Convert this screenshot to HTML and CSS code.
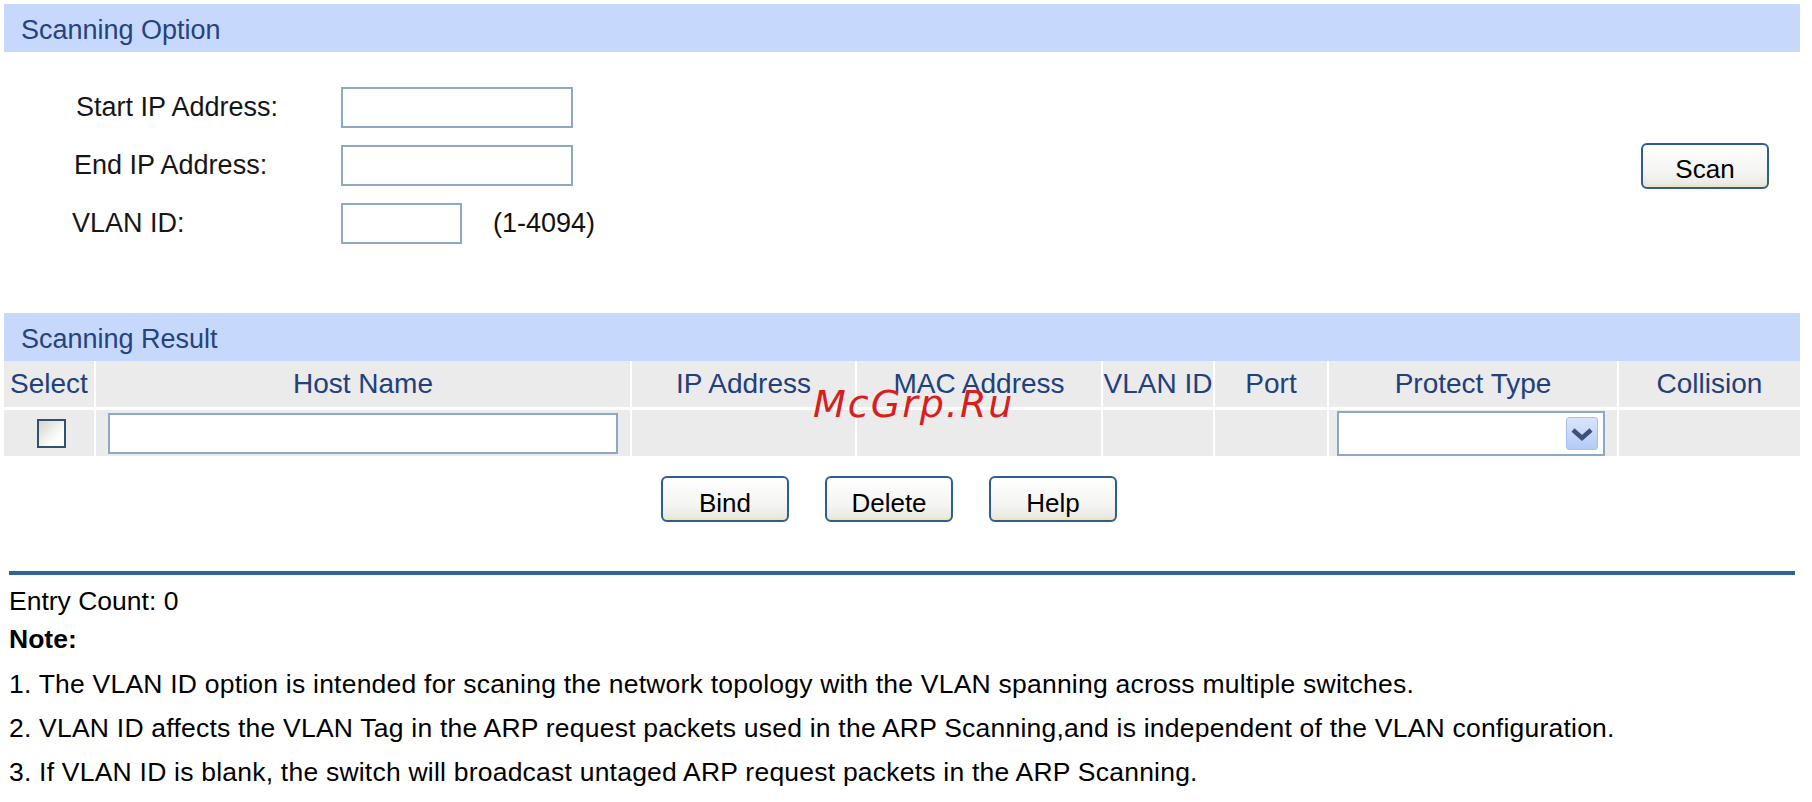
FILE: index.html
```html
<!DOCTYPE html>
<html lang="en">
<head>
<meta charset="utf-8">
<title>ARP Scanning</title>
<link rel="stylesheet" href="styles.css">
</head>
<body>
<div class="page">
  <div class="bar">Scanning Option</div>

  <form class="scan-form">
    <div class="fields">
      <label class="lbl lbl-start" for="start-ip">Start IP Address:</label>
      <input id="start-ip" class="text wide" type="text">
      <label class="lbl lbl-end" for="end-ip">End IP Address:</label>
      <input id="end-ip" class="text wide" type="text">
      <label class="lbl" for="vlan-id">VLAN ID:</label>
      <div class="vlan-cell">
        <input id="vlan-id" class="text short" type="text">
        <span class="range">(1-4094)</span>
      </div>
    </div>
    <button type="button" class="btn">Scan</button>
  </form>

  <div class="bar bar-result">Scanning Result</div>
  <table class="results">
    <colgroup>
      <col class="w-select"><col class="w-host"><col class="w-ip"><col class="w-mac">
      <col class="w-vlan"><col class="w-port"><col class="w-type"><col class="w-coll">
    </colgroup>
    <thead>
      <tr>
        <th>Select</th><th>Host Name</th><th>IP Address</th><th>MAC Address</th>
        <th>VLAN ID</th><th>Port</th><th>Protect Type</th><th>Collision</th>
      </tr>
    </thead>
    <tbody>
      <tr>
        <td><input type="checkbox" class="check"></td>
        <td><input type="text" class="text host"></td>
        <td></td><td></td><td></td><td></td>
        <td>
          <div class="select-box">
            <select class="type-select"><option></option></select>
            <span class="drop-btn">
              <svg width="32" height="33" viewBox="0 0 32 33"><path d="M7 13 L16 21 L25 13" fill="none" stroke="#3e5077" stroke-width="4.5"/></svg>
            </span>
          </div>
        </td>
        <td></td>
      </tr>
    </tbody>
  </table>

  <div class="actions">
    <button type="button" class="btn">Bind</button>
    <button type="button" class="btn">Delete</button>
    <button type="button" class="btn">Help</button>
  </div>

  <hr class="rule">

  <div class="summary">
    <p class="count">Entry Count: 0</p>
    <p class="note-title">Note:</p>
    <p class="note first">1. The VLAN ID option is intended for scaning the network topology with the VLAN spanning across multiple switches.</p>
    <p class="note">2. VLAN ID affects the VLAN Tag in the ARP request packets used in the ARP Scanning,and is independent of the VLAN configuration.</p>
    <p class="note">3. If VLAN ID is blank, the switch will broadcast untaged ARP request packets in the ARP Scanning.</p>
  </div>

  <span class="watermark">McGrp.Ru</span>
</div>
</body>
</html>
```

FILE: styles.css
```css
* { box-sizing: border-box; }

html, body {
  margin: 0;
  background: #ffffff;
}

body {
  font-family: "Liberation Sans", Arial, sans-serif;
  font-size: 27px;
  color: #111111;
}

.page {
  position: relative;
  width: 1812px;
  height: 802px;
  padding: 4px 12px 0 4px;
  overflow: hidden;
}

/* section title strips */
.bar {
  height: 48px;
  display: flex;
  align-items: center;
  padding: 4px 0 0 17px;
  background: #c6d9fc;
  color: #27437c;
  font-size: 27px;
}

.bar-result { margin-top: 69px; }

/* scan options */
.scan-form {
  display: flex;
  align-items: center;
  justify-content: space-between;
  padding: 35px 31px 0 68px;
}

.fields {
  display: grid;
  grid-template-columns: 269px auto;
  row-gap: 17px;
  align-items: center;
}

.lbl { color: #161616; }
.lbl-start { padding-left: 4px; }
.lbl-end { padding-left: 2px; }

.text {
  display: block;
  height: 41px;
  border: 2px solid #8ea7c5;
  background: #ffffff;
  font: inherit;
  padding: 0 6px;
  margin: 0;
}

.wide { width: 232px; }
.short { width: 121px; }

.vlan-cell {
  display: flex;
  align-items: center;
  gap: 31px;
}

.btn {
  width: 128px;
  height: 46px;
  padding: 8px 0 0;
  border: 2px solid #2d5d92;
  border-radius: 6px;
  background: linear-gradient(#ffffff, #f4f4f2 65%, #e6e6e2);
  box-shadow: inset 0 -3px 0 -1px #f1e4b4;
  font-family: "Liberation Sans", Arial, sans-serif;
  font-size: 26px;
  color: #000000;
}

/* result table */
.results {
  width: 1796px;
  table-layout: fixed;
  border-collapse: separate;
  border-spacing: 0;
}

.w-select { width: 90px; }
.w-host { width: 536px; }
.w-ip { width: 225px; }
.w-mac { width: 246px; }
.w-vlan { width: 112px; }
.w-port { width: 114px; }
.w-type { width: 290px; }
.w-coll { width: 183px; }

.results th,
.results td {
  box-sizing: content-box;
  height: 46px;
  padding: 0;
  background: #ebebeb;
}

.results th {
  color: #21407c;
  font-weight: normal;
  font-size: 28px;
}

.results td { border-top: 3px solid #ffffff; }

.results th + th,
.results td + td { border-left: 2px solid #ffffff; }

.check {
  appearance: none;
  display: block;
  width: 29px;
  height: 29px;
  margin: 0 0 0 33px;
  border: 2px solid #34506f;
  background: linear-gradient(135deg, #d6d6ce, #fdfdfb 70%);
}

.host {
  width: 510px;
  margin-left: 12px;
}

.select-box {
  position: relative;
  width: 268px;
  height: 45px;
  margin-left: 8px;
}

.type-select {
  appearance: none;
  display: block;
  width: 100%;
  height: 100%;
  margin: 0;
  border: 2px solid #8ea7c5;
  background: #ffffff;
  font: inherit;
}

.drop-btn {
  position: absolute;
  top: 6px;
  right: 7px;
  width: 32px;
  height: 33px;
  border: 1px solid #a9c0ea;
  border-radius: 3px;
  background: linear-gradient(#d9e5fc, #b5cbf4);
  pointer-events: none;
}

.drop-btn svg {
  display: block;
  margin: -1px 0 0 -1px;
}

/* buttons under the table */
.actions {
  display: flex;
  justify-content: center;
  gap: 36px;
  margin-top: 20px;
  padding-right: 26px;
}

.rule {
  margin: 49px 5px 0 5px;
  height: 4px;
  border: 0;
  background: #2f6496;
}

/* notes */
.summary {
  padding-left: 5px;
  margin-top: 7px;
  font-size: 26.5px;
  color: #000000;
}

.summary p { margin: 0; }

.count,
.note-title { line-height: 38px; }

.note-title { font-weight: bold; }

.note {
  line-height: 44px;
  letter-spacing: 0.22px;
}
.note.first { margin-top: 4px; }

.watermark {
  position: absolute;
  left: 813px;
  top: 385px;
  font-family: "DejaVu Sans", sans-serif;
  font-style: italic;
  font-size: 38px;
  line-height: 1;
  letter-spacing: 2px;
  color: #d81e1e;
}
```
